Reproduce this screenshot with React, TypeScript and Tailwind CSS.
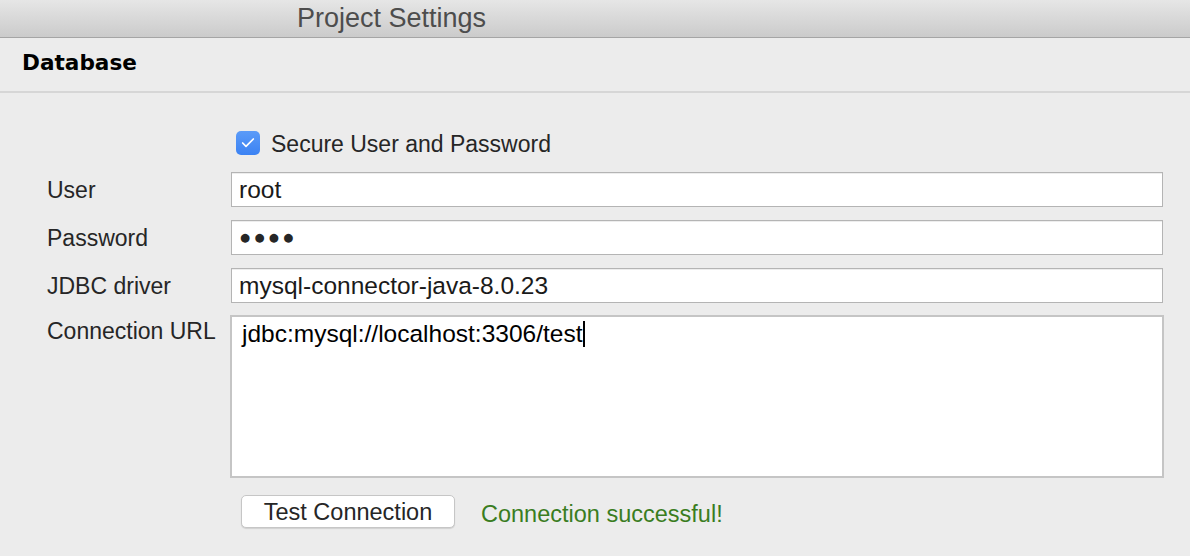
import { Check } from 'lucide-react'

const font = { fontFamily: '"Liberation Sans", Arial, sans-serif' }

function Field({ label, value, dots }: { label: string; value: string; dots?: boolean }) {
  return (
    <div className="flex items-center h-[35px]">
      <div className="w-[184px] text-[23px] text-[#262626] leading-none pt-[1px]">{label}</div>
      <div className="w-[932px] h-[35px] bg-white border border-[#b4b4b4] shadow-[inset_0_1px_0_#ededed] flex items-center pl-[7px]">
        {dots ? (
          <span
            className="text-[11.5px] tracking-[4.4px] text-[#262626] leading-none pl-[1px]"
            style={{ fontFamily: '"DejaVu Sans", sans-serif' }}
          >
            {value}
          </span>
        ) : (
          <span className="text-[24.5px] text-[#1a1a1a] leading-none pt-[1px]">{value}</span>
        )}
      </div>
    </div>
  )
}

export default function App() {
  return (
    <div className="w-[1190px] h-[556px] bg-[#ececec] overflow-hidden" style={font}>
      <div className="h-[38px] bg-gradient-to-b from-[#e6e6e6] to-[#cbcbcb] border-b border-[#a5a5a5] flex items-center pl-[297px]">
        <span className="text-[27px] text-[#4d4d4d] leading-none">Project Settings</span>
      </div>
      <div className="h-[55px] border-b-2 border-[#d6d6d6] flex items-center pl-[22px] pb-[4px]">
        <span
          className="text-[21.6px] font-bold text-black leading-none"
          style={{ fontFamily: '"DejaVu Sans", sans-serif' }}
        >
          Database
        </span>
      </div>

      <div className="pl-[47px] pt-[38px]">
        <div className="flex items-center h-[24px] pl-[189px] gap-[11px]">
          <div className="w-[24px] h-[24px] rounded-[5px] bg-gradient-to-b from-[#5b9bf8] to-[#3b82f3] flex items-center justify-center">
            <Check className="w-[16px] h-[16px] text-white" strokeWidth={2.6} />
          </div>
          <span className="text-[23px] text-[#262626] leading-none pt-[2px]">Secure User and Password</span>
        </div>

        <div className="mt-[17px] flex flex-col gap-[13px]">
          <Field label="User" value="root" />
          <Field label="Password" value="●●●●" dots />
          <Field label="JDBC driver" value="mysql-connector-java-8.0.23" />
        </div>

        <div className="mt-[12px] flex">
          <div className="w-[183px] pt-[5px] text-[23px] text-[#262626] leading-none">Connection URL</div>
          <div className="w-[934px] h-[163px] bg-white border-2 border-[#c5c5c5] pl-[10px] pt-[4px]">
            <span className="text-[24.5px] text-black leading-none inline-flex items-center">
              jdbc:mysql://localhost:3306/test
              <span className="inline-block w-[2px] h-[26px] bg-black ml-[1px]" />
            </span>
          </div>
        </div>

        <div className="mt-[17px] flex items-center pl-[194px] gap-[26px]">
          <button className="w-[214px] h-[33px] bg-white border border-[#c6c6c6] rounded-[5px] shadow-[0_1px_1px_rgba(0,0,0,0.12)] text-[23.5px] text-[#262626] leading-none pt-[3px]">
            Test Connection
          </button>
          <span className="text-[23.5px] text-[#3a7d1f] leading-none pt-[6px]">Connection successful!</span>
        </div>
      </div>
    </div>
  )
}
